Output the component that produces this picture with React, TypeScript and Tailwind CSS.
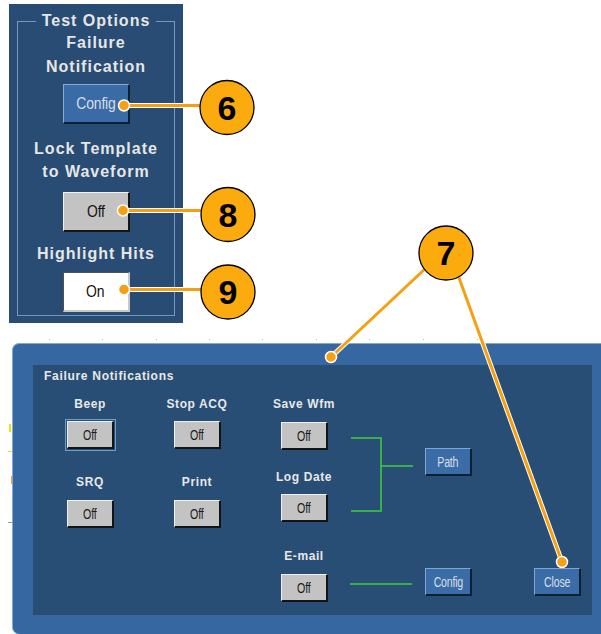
import type { ReactNode } from 'react';

const font = "font-['Liberation_Sans',Arial,sans-serif]";

function BigButton({ kind, label }: { kind: 'blue' | 'gray' | 'white'; label: string }) {
  const look =
    kind === 'blue'
      ? 'bg-[#3a6ba6] border-t border-l border-t-[#86abd4] border-l-[#86abd4] border-b-2 border-r-2 border-b-[#0e2035] border-r-[#0e2035] text-[#d6dde6]'
      : kind === 'gray'
        ? 'bg-[#c3c3c3] border-t border-l border-t-[#f2f2f2] border-l-[#f2f2f2] border-b-2 border-r-2 border-b-[#151515] border-r-[#151515] text-[#111]'
        : 'bg-white border-t border-l border-t-[#505050] border-l-[#505050] border-b-2 border-r-2 border-b-[#c8c8c8] border-r-[#c8c8c8] text-[#111]';
  return (
    <div className={`w-[67px] h-[40px] flex items-center justify-center ${look}`}>
      <span className="inline-block text-[17px] leading-none scale-x-[0.82] tracking-[-0.2px]">{label}</span>
    </div>
  );
}

function SmallButton({ kind, label, focus }: { kind: 'blue' | 'gray'; label: string; focus?: boolean }) {
  const look =
    kind === 'blue'
      ? 'bg-[#3a6ca7] border-t border-l border-t-[#7fa6d2] border-l-[#7fa6d2] border-b-2 border-r-2 border-b-[#0d1f33] border-r-[#0d1f33] text-[#d8dee6]'
      : 'bg-[#c3c3c3] border-t border-l border-t-[#f0f0f0] border-l-[#f0f0f0] border-b-2 border-r-2 border-b-[#141414] border-r-[#141414] text-[#1a1a1a]';
  return (
    <div
      className={`w-[47px] h-[28px] flex items-center justify-center ${look} ${
        focus ? 'outline outline-1 outline-offset-1 outline-[#6a9fd4]' : ''
      }`}
    >
      <span className="inline-block text-[14px] leading-none scale-x-[0.76] tracking-[-0.3px]">{label}</span>
    </div>
  );
}

function Heading({ children, className = '' }: { children: ReactNode; className?: string }) {
  return (
    <div className={`text-[12px] leading-[15px] font-bold tracking-[0.6px] text-[#e8e8e8] whitespace-nowrap ${className}`}>
      {children}
    </div>
  );
}

function PanelText({ children, className = '' }: { children: ReactNode; className?: string }) {
  return (
    <div className={`text-[16px] leading-[23px] font-bold tracking-[1px] text-[#e6e6e6] text-center whitespace-nowrap ${className}`}>
      {children}
    </div>
  );
}

function Callout({ cx, cy, n }: { cx: number; cy: number; n: string }) {
  return (
    <g>
      <circle cx={cx} cy={cy} r={27} fill="#fbab0d" stroke="#000" strokeWidth={1.3} />
      <text
        x={cx}
        y={cy + 12}
        textAnchor="middle"
        fontSize={34}
        fontWeight="bold"
        fontFamily="'Liberation Sans', Arial, sans-serif"
        fill="#000"
      >
        {n}
      </text>
    </g>
  );
}

function Leader({ x1, y1, x2, y2 }: { x1: number; y1: number; x2: number; y2: number }) {
  return (
    <g>
      <line x1={x1} y1={y1} x2={x2} y2={y2} stroke="#fff" strokeWidth={5} />
      <line x1={x1} y1={y1} x2={x2} y2={y2} stroke="#f5a012" strokeWidth={3} />
    </g>
  );
}

function Dot({ cx, cy }: { cx: number; cy: number }) {
  return <circle cx={cx} cy={cy} r={5.5} fill="#f5a012" stroke="#fff" strokeWidth={1.5} />;
}

export default function App() {
  const ticks = [49, 102, 156, 209, 262, 316, 369, 423, 477];
  return (
    <div className={`relative w-[601px] h-[634px] overflow-hidden bg-white flex flex-col ${font}`}>
      {/* Test options side panel */}
      <div className="ml-[9px] mt-[4px] w-[174px] h-[319px] bg-[#284c73] pt-[7px] px-[8px]">
        <fieldset className="h-[305px] border border-[#7398c0] px-0">
          <legend className="mx-auto px-[6px] text-[16px] leading-[20px] font-bold tracking-[1px] text-[#e6e6e6] whitespace-nowrap">
            Test Options
          </legend>
          <div className="flex flex-col items-center">
            <PanelText>Failure</PanelText>
            <PanelText className="mt-[1px]">Notification</PanelText>
            <div className="mt-[6px]">
              <BigButton kind="blue" label="Config" />
            </div>
            <PanelText className="mt-[13px]">Lock Template</PanelText>
            <PanelText>to Waveform</PanelText>
            <div className="mt-[9px]">
              <BigButton kind="gray" label="Off" />
            </div>
            <PanelText className="mt-[10px]">Highlight Hits</PanelText>
            <div className="mt-[7px]">
              <BigButton kind="white" label="On" />
            </div>
          </div>
        </fieldset>
      </div>

      {/* Failure notifications dialog */}
      <div className="ml-[12px] mt-[20px] w-[600px] h-[291px] shrink-0 bg-[#3767a0] rounded-l-[7px] border-t border-l border-[#86a9cf] pl-[20px] pt-[21px]">
        <div className="w-[559px] h-[250px] bg-[#284e76] flex flex-col">
          <div className="pl-[11px] pt-[4px] text-[12px] leading-[15px] font-bold tracking-[0.7px] text-[#e8e8e8]">
            Failure Notifications
          </div>
          <div className="flex pt-[4px]">
            <div className="w-[94px] ml-[10px] flex flex-col items-center">
              <Heading className="mt-[9px]">Beep</Heading>
              <div className="mt-[9px]">
                <SmallButton kind="gray" label="Off" focus />
              </div>
              <Heading className="mt-[26px]">SRQ</Heading>
              <div className="mt-[10px]">
                <SmallButton kind="gray" label="Off" />
              </div>
            </div>
            <div className="w-[94px] ml-[13px] flex flex-col items-center">
              <Heading className="mt-[9px]">Stop ACQ</Heading>
              <div className="mt-[9px]">
                <SmallButton kind="gray" label="Off" />
              </div>
              <Heading className="mt-[26px]">Print</Heading>
              <div className="mt-[10px]">
                <SmallButton kind="gray" label="Off" />
              </div>
            </div>
            <div className="w-[94px] ml-[13px] flex flex-col items-center">
              <Heading className="mt-[9px]">Save Wfm</Heading>
              <div className="mt-[10px]">
                <SmallButton kind="gray" label="Off" />
              </div>
              <Heading className="mt-[20px]">Log Date</Heading>
              <div className="mt-[9px]">
                <SmallButton kind="gray" label="Off" />
              </div>
              <Heading className="mt-[27px]">E-mail</Heading>
              <div className="mt-[10px]">
                <SmallButton kind="gray" label="Off" />
              </div>
            </div>
            <div className="w-[74px]">
              <svg width="74" height="214" className="block overflow-visible">
                <g stroke="#3fcf3f" strokeWidth={1.5} fill="none">
                  <polyline points="0,50 30,50 30,123 0,123" />
                  <line x1={30} y1={78} x2={62} y2={78} />
                  <line x1={-1} y1={196} x2={61} y2={196} />
                </g>
              </svg>
            </div>
            <div className="w-[47px] flex flex-col">
              <div className="mt-[60px]">
                <SmallButton kind="blue" label="Path" />
              </div>
              <div className="mt-[92px]">
                <SmallButton kind="blue" label="Config" />
              </div>
            </div>
            <div className="ml-[62px] w-[47px]">
              <div className="mt-[180px]">
                <SmallButton kind="blue" label="Close" />
              </div>
            </div>
          </div>
        </div>
      </div>

      {/* callouts and stray graticule marks */}
      <svg className="absolute inset-0 pointer-events-none" width="601" height="634">
        {ticks.map((x) => (
          <rect key={x} x={x} y={339} width={1} height={1} fill="#bdbdbd" />
        ))}
        <rect x={9} y={424} width={2} height={8} fill="#e6e600" />
        <rect x={8} y={451} width={4} height={1} fill="#e6e600" />
        <rect x={11} y={476} width={1} height={8} fill="#f0a030" />
        <rect x={8} y={522} width={4} height={1} fill="#6f9fd0" />

        <Leader x1={124} y1={105.5} x2={205} y2={105.5} />
        <Leader x1={123} y1={210.5} x2={205} y2={210.5} />
        <Leader x1={124} y1={289.5} x2={205} y2={289.5} />
        <Leader x1={331} y1={357} x2={426} y2={268} />
        <Leader x1={562} y1={562} x2={458} y2={275} />

        <Dot cx={124} cy={105.5} />
        <Dot cx={123} cy={210.5} />
        <Dot cx={124} cy={289.5} />
        <Dot cx={331} cy={357} />
        <Dot cx={562} cy={562} />

        <Callout cx={227} cy={107.5} n="6" />
        <Callout cx={228} cy={214.5} n="8" />
        <Callout cx={228} cy={292} n="9" />
        <Callout cx={446} cy={253} n="7" />
      </svg>
    </div>
  );
}
